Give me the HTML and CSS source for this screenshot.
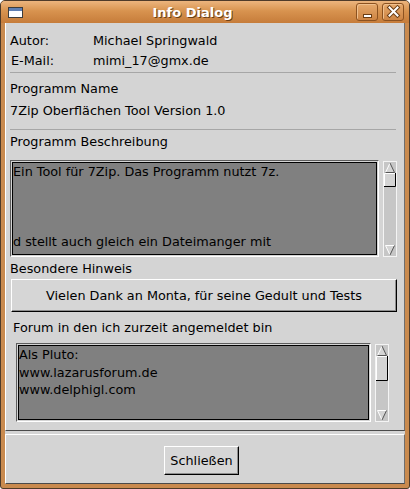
FILE: index.html
```html
<!DOCTYPE html>
<html>
<head>
<meta charset="utf-8">
<link rel="stylesheet" href="styles.css">
</head>
<body>
<div class="window">
  <div class="titlebar">
    <svg class="wicon" width="15" height="11" viewBox="0 0 15 11">
      <rect x="0.5" y="0.5" width="14" height="10" fill="#ffffff" stroke="#3c3c3c"/>
      <rect x="1" y="1" width="13" height="3" fill="#5f7fb3"/>
    </svg>
    <div class="title">Info Dialog</div>
    <div class="tbuttons">
      <span class="tbtn">
        <svg width="22" height="18" viewBox="0 0 22 18">
          <rect x="7.5" y="11.5" width="8" height="3" fill="#ffffff" stroke="#6b3d14"/>
        </svg>
      </span>
      <span class="tbtn">
        <svg width="22" height="18" viewBox="0 0 22 18">
          <path d="M7.5 4.5 L15.5 12.5 M15.5 4.5 L7.5 12.5" stroke="#6b3d14" stroke-width="4" stroke-linecap="square"/>
          <path d="M7.5 4.5 L15.5 12.5 M15.5 4.5 L7.5 12.5" stroke="#ffffff" stroke-width="2" stroke-linecap="square"/>
        </svg>
      </span>
    </div>
  </div>
  <div class="frame">
    <div class="client">
      <div class="panel main">
        <div class="row"><span class="lbl">Autor:</span><span>Michael Springwald</span></div>
        <div class="row"><span class="lbl lbl-mail">E-Mail:</span><span>mimi_17@gmx.de</span></div>
        <div class="sep sep1"></div>
        <div class="line l-name">Programm Name</div>
        <div class="line l-ver">7Zip Oberflächen Tool Version 1.0</div>
        <div class="sep sep2"></div>
        <div class="line l-desc">Programm Beschreibung</div>
        <div class="memorow memorow1">
          <div class="memo memo1">
            <div class="memo-in">
              <div class="mline">Ein Tool für 7Zip. Das Programm nutzt 7z.</div>
              <div class="mline">&nbsp;</div>
              <div class="mline">&nbsp;</div>
              <div class="mline">&nbsp;</div>
              <div class="mline">d stellt auch gleich ein Dateimanger mit</div>
            </div>
          </div>
          <svg class="sbar sbar1" width="14" height="96" viewBox="0 0 14 96">
            <rect x="0.5" y="0.5" width="13" height="95" fill="#c6c6c6" stroke="#f4f4f4"/>
            <path d="M7 2 L2.5 11.5 L11.5 11.5 Z" fill="#d4d4d4"/>
            <path d="M2.5 11.5 L7 2" stroke="#ffffff" fill="none"/>
            <path d="M7 2 L11.5 11.5 L2.5 11.5" stroke="#555555" fill="none"/>
            <rect x="1" y="12" width="12" height="14" fill="#d4d4d4"/>
            <path d="M1.5 25 L1.5 12.5 L12 12.5" stroke="#ffffff" fill="none"/>
            <path d="M1 25.5 L12.5 25.5 L12.5 12" stroke="#000000" fill="none"/>
            <path d="M2.5 84.5 L11.5 84.5 L7 94 Z" fill="#d4d4d4"/>
            <path d="M11.5 84.5 L2.5 84.5 L7 94" stroke="#ffffff" fill="none"/>
            <path d="M7 94 L11.5 84.5" stroke="#555555" fill="none"/>
          </svg>
        </div>
        <div class="line l-hint">Besondere Hinweis</div>
        <div class="btn btn-thanks">Vielen Dank an Monta, für seine Gedult und Tests</div>
        <div class="line l-forum">Forum in den ich zurzeit angemeldet bin</div>
        <div class="memorow memorow2">
          <div class="memo memo2">
            <div class="memo-in">
              <div class="mline">Als Pluto:</div>
              <div class="mline">www.lazarusforum.de</div>
              <div class="mline">www.delphigl.com</div>
              <div class="mline">&nbsp;</div>
              <div class="mline">Als Mimi_17:</div>
            </div>
          </div>
          <svg class="sbar sbar2" width="14" height="78" viewBox="0 0 14 78">
            <rect x="0.5" y="0.5" width="13" height="77" fill="#c6c6c6" stroke="#f4f4f4"/>
            <path d="M7 2 L2.5 11.5 L11.5 11.5 Z" fill="#d4d4d4"/>
            <path d="M2.5 11.5 L7 2" stroke="#ffffff" fill="none"/>
            <path d="M7 2 L11.5 11.5 L2.5 11.5" stroke="#555555" fill="none"/>
            <rect x="1" y="12" width="12" height="25" fill="#d4d4d4"/>
            <path d="M1.5 36 L1.5 12.5 L12 12.5" stroke="#ffffff" fill="none"/>
            <path d="M1 36.5 L12.5 36.5 L12.5 12" stroke="#000000" fill="none"/>
            <path d="M2.5 66.5 L11.5 66.5 L7 76 Z" fill="#d4d4d4"/>
            <path d="M11.5 66.5 L2.5 66.5 L7 76" stroke="#ffffff" fill="none"/>
            <path d="M7 76 L11.5 66.5" stroke="#555555" fill="none"/>
          </svg>
        </div>
      </div>
      <div class="panel bottom">
        <div class="btn btn-close">Schließen</div>
      </div>
    </div>
  </div>
</div>
</body>
</html>
```

FILE: styles.css
```css
html, body {
  margin: 0;
  padding: 0;
}
body {
  width: 410px;
  height: 489px;
  overflow: hidden;
  font-family: "DejaVu Sans", "Liberation Sans", sans-serif;
  font-size: 12.8px;
  color: #000;
  background: #ffffff;
}
.window {
  box-sizing: border-box;
  width: 410px;
  height: 489px;
  border: 1px solid #4e3b2a;
  border-radius: 5px 5px 3px 3px;
  background: #c98a4e;
  display: flex;
  flex-direction: column;
  overflow: hidden;
}
.titlebar {
  height: 22px;
  flex: none;
  display: flex;
  align-items: center;
  padding: 0 5px 0 7px;
  background: linear-gradient(#ecb57e, #d8934f 45%, #c67c3a);
}
.wicon {
  display: block;
  flex: none;
}
.title {
  flex: 1;
  text-align: center;
  font-weight: bold;
  font-size: 13px;
  color: #ffffff;
  text-shadow: 1px 1px 0 #6b3f16;
  padding-left: 6px;
}
.tbuttons {
  display: flex;
  gap: 4px;
}
.tbtn {
  box-sizing: border-box;
  width: 22px;
  height: 18px;
  border: 1px solid #8c5220;
  border-radius: 3px;
  box-shadow: inset 1px 1px 0 #f0c08e;
  background: linear-gradient(#e6a96c, #cd8443);
  position: relative;
}
.tbtn svg {
  position: absolute;
  left: -1px;
  top: -1px;
}
.frame {
  flex: 1;
  display: flex;
  flex-direction: column;
  padding: 0 4px 4px 4px;
}
.client {
  flex: 1;
  background: #d4d4d4;
  display: flex;
  flex-direction: column;
}
.panel {
  box-sizing: border-box;
  background: #d4d4d4;
}
.main {
  height: 408px;
  flex: none;
  border-left: 1px solid #ffffff;
  border-right: 1px solid #6e6e6e;
  border-bottom: 1px solid #4a4a4a;
  padding: 8px 0 0 4px;
  display: flex;
  flex-direction: column;
  align-items: flex-start;
}
.row {
  display: flex;
  height: 20px;
  line-height: 20px;
  white-space: nowrap;
}
.lbl {
  width: 83px;
}
.lbl-mail {
  padding-left: 1px;
  width: 82px;
}
.line {
  height: 20px;
  line-height: 20px;
  white-space: nowrap;
}
.sep {
  width: 386px;
  height: 0;
  border-top: 1px solid #a6a6a6;
}
.sep1 { margin-top: 1px; }
.l-name { margin-top: 6px; }
.l-ver { margin-top: 2px; }
.sep2 { margin-top: 8px; }
.l-desc { margin-top: 2px; }
.memorow {
  display: flex;
  align-items: flex-start;
}
.memorow1 { margin-top: 8px; }
.memo {
  box-sizing: border-box;
  border: 1px solid;
  border-color: #5e5e5e #ffffff #ffffff #5e5e5e;
  padding: 1px;
  background: #d4d4d4;
}
.memo-in {
  box-sizing: border-box;
  height: 100%;
  border: 1px solid #000000;
  background: #808080;
  overflow: hidden;
  line-height: 17.5px;
  white-space: nowrap;
}
.memo1 {
  width: 369px;
  height: 97px;
}
.memo2 {
  width: 355px;
  height: 79px;
}
.sbar {
  display: block;
  flex: none;
  margin-left: 4px;
  margin-top: 1px;
}
.l-hint { margin-top: 2px; }
.btn {
  box-sizing: border-box;
  border: 1px solid;
  border-color: #ffffff #000000 #000000 #ffffff;
  box-shadow: inset -1px -1px 0 #8e8e8e;
  background: #d6d6d6;
  text-align: center;
  white-space: nowrap;
}
.btn-thanks {
  margin-left: 1px;
  width: 386px;
  height: 33px;
  line-height: 31px;
}
.l-forum {
  margin-top: 6px;
  margin-left: 3px;
}
.memorow2 {
  margin-top: 5px;
  margin-left: 6px;
}
.bottom {
  flex: none;
  margin-top: 3px;
  height: 50px;
  border: 1px solid;
  border-color: #ffffff #6e6e6e #4a4a4a #ffffff;
  display: flex;
  justify-content: center;
  align-items: flex-start;
  padding: 11px 7px 0 0;
}
.btn-close {
  width: 75px;
  height: 29px;
  line-height: 27px;
}
```
